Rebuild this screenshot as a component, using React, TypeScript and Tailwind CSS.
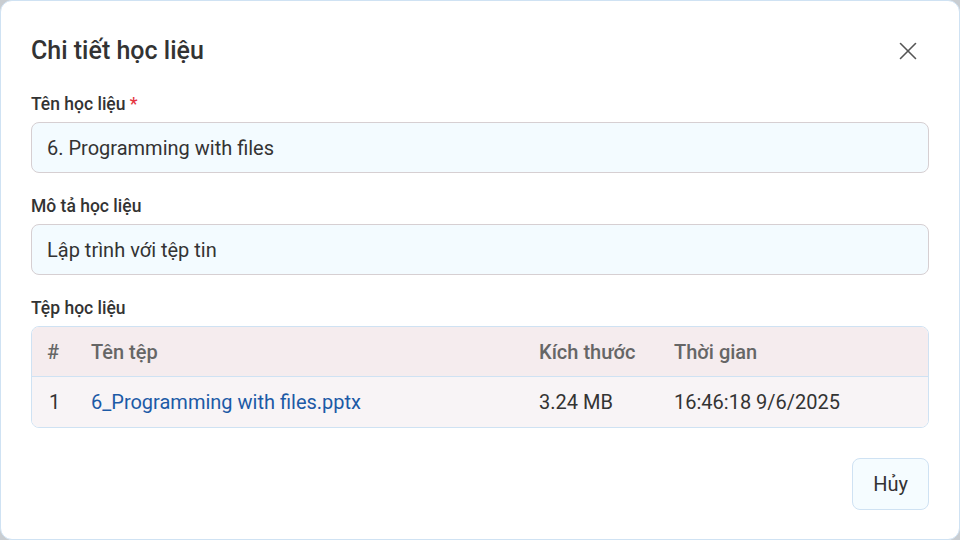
import { X } from "lucide-react"

const files = [
    {
        id: 1,
        name: "6_Programming with files.pptx",
        size: "3.24 MB",
        time: "16:46:18 9/6/2025",
    },
]

export default function App() {
    return (
        <div className="w-[960px] h-[540px] bg-[#c9cdd1] font-['Roboto',sans-serif] text-[#333]">
            <div className="w-[960px] h-[540px] rounded-[12px] border border-[#cfe2f3] bg-white px-[30px] pt-[34px]">
                {/* Header */}
                <div className="flex items-center justify-between h-[32px]">
                    <h2 className="text-[25px] font-medium text-[#333] leading-[32px]">Chi tiết học liệu</h2>
                    <button className="w-[30px] h-[30px] flex items-center justify-center mr-[6px] text-[#555]">
                        <X className="w-[30px] h-[30px]" strokeWidth={1.3} />
                    </button>
                </div>

                {/* Name */}
                <label className="block mt-[25px] text-[17.5px] font-medium leading-[24px]">
                    Tên học liệu <span className="text-[#e5343f]">*</span>
                </label>
                <div className="mt-[6px] h-[51px] rounded-[8px] border border-[#d6cfd2] bg-[#f3fbff] px-[15px] flex items-center text-[20px]">
                    6. Programming with files
                </div>

                {/* Description */}
                <label className="block mt-[21px] text-[17.5px] font-medium leading-[24px]">Mô tả học liệu</label>
                <div className="mt-[6px] h-[51px] rounded-[8px] border border-[#d6cfd2] bg-[#f3fbff] px-[15px] flex items-center text-[20px]">
                    Lập trình với tệp tin
                </div>

                {/* Files */}
                <label className="block mt-[21px] text-[17.5px] font-medium leading-[24px]">Tệp học liệu</label>
                <div className="mt-[6px] rounded-[8px] border border-[#cfe2f3] overflow-hidden text-[20px]">
                    <div className="grid grid-cols-[44px_448px_135px_1fr] h-[50px] items-center bg-[#f5ecee] px-[15px] font-medium text-[#666] border-b border-[#cfe2f3]">
                        <span>#</span>
                        <span>Tên tệp</span>
                        <span>Kích thước</span>
                        <span>Thời gian</span>
                    </div>
                    {files.map((f) => (
                        <div key={f.id} className="grid grid-cols-[44px_448px_135px_1fr] h-[50px] items-center bg-[#f8f4f6] px-[15px]">
                            <span className="pl-[2px]">{f.id}</span>
                            <a className="text-[#1c5aa6]">{f.name}</a>
                            <span>{f.size}</span>
                            <span>{f.time}</span>
                        </div>
                    ))}
                </div>

                {/* Footer */}
                <div className="flex justify-end mt-[30px]">
                    <button className="h-[52px] px-[20px] rounded-[8px] border border-[#cfe2f3] bg-[#f5fcff] text-[20px] text-[#333]">
                        Hủy
                    </button>
                </div>
            </div>
        </div>
    )
}
